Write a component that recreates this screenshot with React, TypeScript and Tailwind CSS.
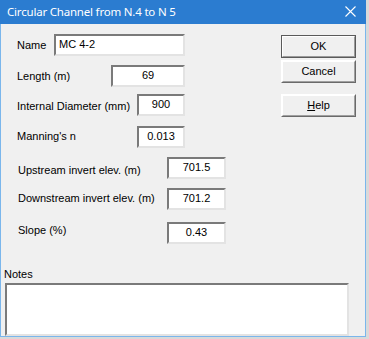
const body = { fontFamily: '"Liberation Sans", Arial, sans-serif' };

type FieldProps = {
  label: string;
  value: string;
  width: string;
  rowWidth: string;
  labelShift?: string;
  className?: string;
};

const Field: React.FC<FieldProps> = ({ label, value, width, rowWidth, labelShift = '', className = '' }) => (
  <div className={`flex items-center justify-between ${rowWidth} ${className}`}>
    <span className={labelShift}>{label}</span>
    <div
      className={`h-[22px] ${width} bg-white border-2 border-t-[#7a7a7a] border-l-[#7a7a7a] border-r-[#e3e3e3] border-b-[#e3e3e3] flex items-center justify-center`}
    >
      {value}
    </div>
  </div>
);

const WinButton: React.FC<{ children: React.ReactNode; isDefault?: boolean; className?: string }> = ({
  children,
  isDefault,
  className = '',
}) => (
  <div
    className={`w-[75px] h-[23px] flex items-center justify-center ${
      isDefault ? 'border border-[#5a5a5a]' : 'border border-t-white border-l-white border-r-[#6a6a6a] border-b-[#6a6a6a]'
    } ${className}`}
  >
    <div
      className={`w-full h-full flex items-center justify-center border border-t-white border-l-white ${
        isDefault ? 'border-r-[#9a9a9a] border-b-[#9a9a9a]' : 'border-r-[#a0a0a0] border-b-[#a0a0a0] border-t-[#f0f0f0] border-l-[#f0f0f0]'
      }`}
    >
      {children}
    </div>
  </div>
);

export default function App() {
  return (
    <div className="w-[369px] h-[339px] bg-[#d9d9d9]">
      <div className="w-[366px] h-[337px] flex flex-col bg-[#f0f0f0] border border-t-0 border-[#7ab6ec]">
        <div className="h-[26px] -mx-px bg-[#2b7cd0] flex items-center justify-between pl-[7px] pr-[10px] text-white text-[11.5px] tracking-[-0.2px]" style={{ fontFamily: '"Noto Sans", "Open Sans", sans-serif' }}>
          <span>Circular Channel from N.4 to N 5</span>
          <svg width="11" height="11" viewBox="0 0 11 11">
            <path d="M0.5 0.5L10.5 10.5M10.5 0.5L0.5 10.5" stroke="white" strokeWidth="1.1" />
          </svg>
        </div>

        <div className="flex-1 flex flex-col text-[11px] text-black" style={body}>
          <div className="flex justify-between pl-[16px] pr-[9px]">
            <div className="flex flex-col pt-[10px]">
              <div className="flex items-center w-[168px] justify-between">
                <span className="pt-[2px]">Name</span>
                <div className="h-[22px] w-[131px] bg-white border-2 border-t-[#7a7a7a] border-l-[#7a7a7a] border-r-[#e3e3e3] border-b-[#e3e3e3] flex items-center pl-[3px]">
                  MC 4-2
                </div>
              </div>
              <Field className="mt-[9px]" rowWidth="w-[168px]" width="w-[74px]" label="Length (m)" value="69" labelShift="pt-[2px]" />
              <Field className="mt-[7px]" rowWidth="w-[168px]" width="w-[48px]" label="Internal Diameter (mm)" value="900" labelShift="pt-[3px]" />
              <Field className="mt-[10px]" rowWidth="w-[168px]" width="w-[48px]" label="Manning's n" value="0.013" />
              <Field className="mt-[9px]" rowWidth="w-[209px]" width="w-[59px]" label="Upstream invert elev. (m)" value="701.5" labelShift="pt-[5px] pl-px" />
              <Field className="mt-[9px]" rowWidth="w-[209px]" width="w-[59px]" label="Downstream invert elev. (m)" value="701.2" labelShift="pl-px" />
              <Field className="mt-[12px]" rowWidth="w-[209px]" width="w-[59px]" label="Slope (%)" value="0.43" labelShift="pb-[5px] pl-px" />
            </div>

            <div className="flex flex-col pt-[11px]">
              <WinButton isDefault>OK</WinButton>
              <WinButton className="mt-[2px]">Cancel</WinButton>
              <WinButton className="mt-[11px] h-[22px]">
                <span>
                  <span className="underline">H</span>elp
                </span>
              </WinButton>
            </div>
          </div>

          <div className="mt-[22px] pl-[3px]">Notes</div>
          <div className="ml-[4px] mt-px w-[344px] h-[53px] bg-white border-2 border-t-[#7a7a7a] border-l-[#7a7a7a] border-r-[#e3e3e3] border-b-[#e3e3e3]" />
        </div>
      </div>
    </div>
  );
}
